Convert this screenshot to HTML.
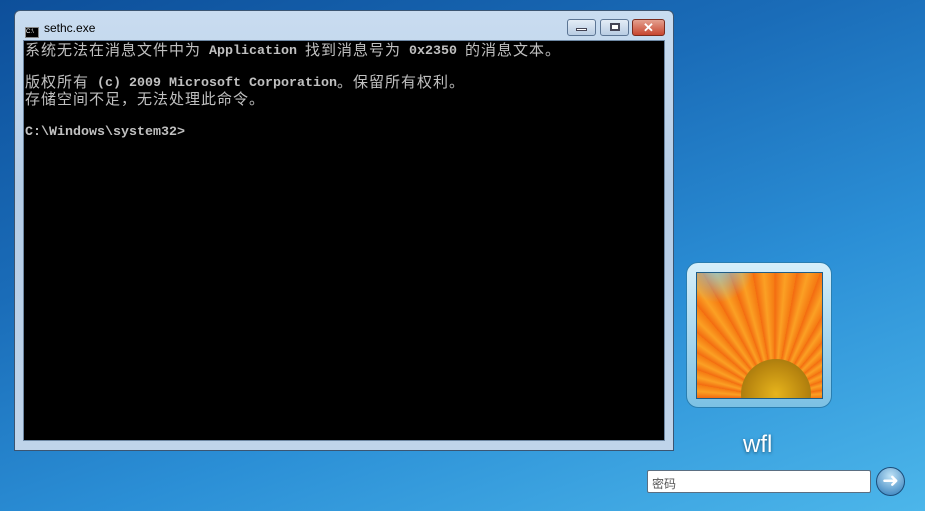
<!DOCTYPE html>
<html><head><meta charset="utf-8"><style>
*{margin:0;padding:0;box-sizing:border-box}
body{width:925px;height:511px;overflow:hidden;position:relative;
background:linear-gradient(160deg,#0d4f9a 0%,#1a6cb8 35%,#2b8fd6 65%,#4cb6ea 100%);font-family:"Liberation Sans","Noto Sans CJK SC",sans-serif}
.win{position:absolute;left:14px;top:10px;width:660px;height:441px;border:1px solid #3b5572;border-radius:6px 6px 0 0;
background:linear-gradient(180deg,#c9dcf0 0%,#b4cce6 40%,#bfd4ea 100%)}
.title{position:absolute;left:10px;top:10px;font-size:12px;color:#000}
.ico{display:inline-block;width:14px;height:11px;background:#000;border:1px solid #888;vertical-align:-1px;margin-right:5px;color:#fff;font-size:6px;line-height:9px}
.con{position:absolute;left:8px;top:29px;width:642px;height:401px;background:#000;border:1px solid #6d87a3;
font-family:"Liberation Mono",monospace;color:#c0c0c0;font-size:13.33px;padding:3px 0 0 1px;white-space:pre;font-weight:bold}
.con div{height:16.2px;line-height:16px;overflow:visible}
.c{font-family:"Noto Sans CJK SC",sans-serif;font-size:15px;font-weight:normal;letter-spacing:1px;line-height:16px;vertical-align:top;display:inline-block;height:16px;position:relative;top:-2px}
.btn{position:absolute;top:8px;height:17px;border:1px solid #5c7594;border-radius:3px;background:linear-gradient(#e3ecf6,#b9cde3)}
.cls{background:linear-gradient(#e4a08f,#c7462f);border-color:#7a2b1d}
.pic{position:absolute;left:686px;top:262px;width:146px;height:146px;border-radius:12px;background:linear-gradient(#d6effa,#7cc1e4);border:1px solid #2a7eb0}
.img{position:absolute;left:9px;top:9px;width:127px;height:127px;border:1px solid #1e5c86;overflow:hidden;
background:repeating-conic-gradient(from -90deg at 62% 100%,#f36a10 0deg,#fba024 5deg,#f57a12 10deg);}
.img:before{content:"";position:absolute;left:-20px;top:-60px;width:80px;height:90px;background:radial-gradient(#7cd0f5,rgba(124,208,245,0) 70%)}
.img:after{content:"";position:absolute;left:44px;top:86px;width:70px;height:70px;border-radius:50%;background:radial-gradient(#e6b41c,#b8850f 60%,#8a6a10)}
.name{position:absolute;left:743px;top:431px;font-size:24px;color:#fff;text-shadow:0 1px 3px rgba(0,0,0,.5)}
.pw{position:absolute;left:647px;top:470px;width:224px;height:23px;background:#fff;border:1px solid #5b6f82;border-radius:2px;font-size:12px;color:#555;padding:4px 0 0 4px}
.go{position:absolute;left:876px;top:467px;width:29px;height:29px;border-radius:50%;background:radial-gradient(circle at 50% 30%,#bfe3f7,#2c79b8);border:1px solid #1c4d7a;color:#fff;font-size:20px;line-height:26px;text-align:center}
</style></head><body>
<div class="win">
<div class="title"><span class="ico">C:\</span>sethc.exe</div>
<div class="btn" style="left:552px;width:29px"><div style="position:absolute;left:8px;top:8px;width:11px;height:3px;background:#fff;border:1px solid #445"></div></div>
<div class="btn" style="left:585px;width:29px"><div style="position:absolute;left:9px;top:3px;width:10px;height:8px;border:2px solid #445;background:#fff"></div></div>
<div class="btn cls" style="left:617px;width:33px;color:#fff;font-weight:bold;font-size:13px;text-align:center;line-height:15px">✕</div>
<div class="con"><div><span class="c">系统无法在消息文件中为</span> Application <span class="c">找到消息号为</span> 0x2350 <span class="c">的消息文本。</span></div><div></div><div><span class="c">版权所有</span> (c) 2009 Microsoft Corporation<span class="c">。保留所有权利。</span></div><div><span class="c">存储空间不足，无法处理此命令。</span></div><div></div><div>C:\Windows\system32&gt;</div></div>
</div>
<div class="pic"><div class="img"></div></div>
<div class="name">wfl</div>
<div class="pw">密码</div>
<div class="go">➜</div>
</body></html>
